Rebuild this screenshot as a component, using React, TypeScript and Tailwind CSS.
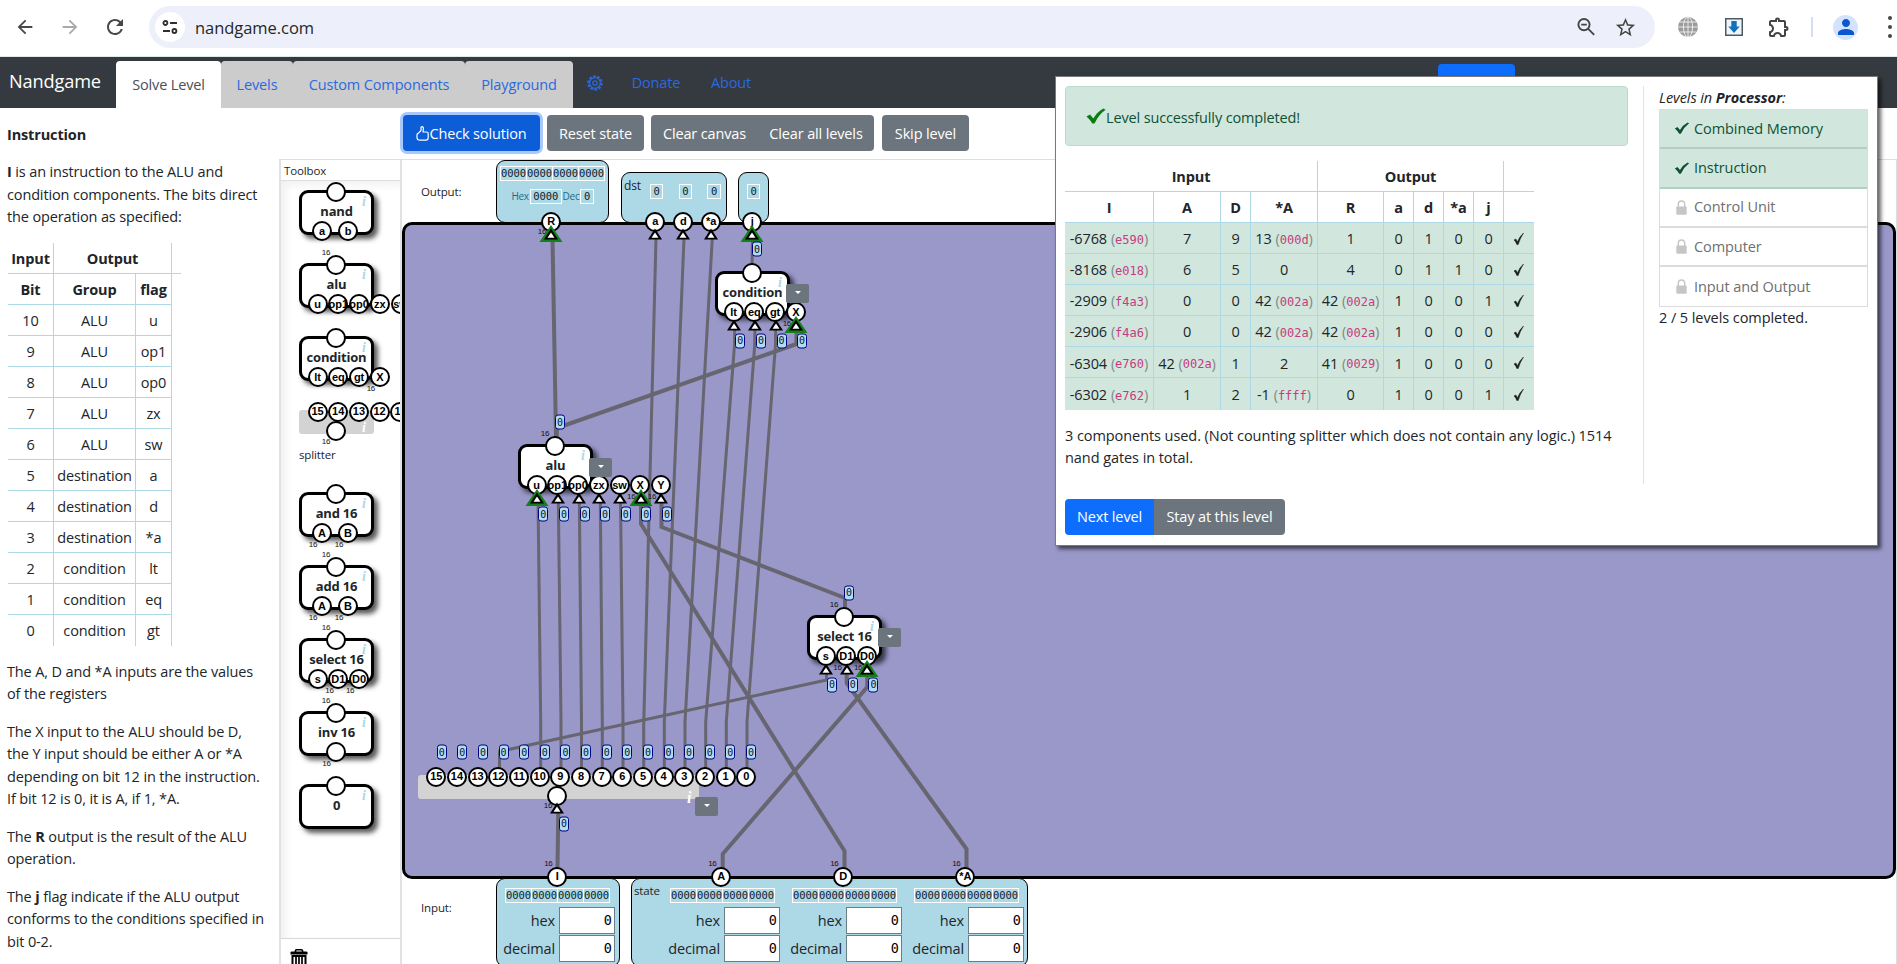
import React from "react";
import { MdArrowBack, MdArrowForward, MdRefresh, MdStarBorder, MdOutlineExtension, MdPerson } from "react-icons/md";

function BrowserBar() {
  return (
    <header className="flex h-[57px] shrink-0 items-center border-b border-[#dfeae3] bg-white pb-[2px]">
      <div className="flex w-[149px] items-center pl-[14px]">
        <MdArrowBack className="size-[22px] text-[#474747]" />
        <MdArrowForward className="ml-[23px] size-[22px] text-[#a9a9a9]" />
        <MdRefresh className="ml-[22px] size-[24px] text-[#474747]" />
      </div>
      <div className="flex h-[42px] w-[1506px] items-center rounded-full bg-[#edf0fa] pl-[6px] pr-[18px]">
        <span className="flex size-[30px] items-center justify-center rounded-full bg-white">
          <svg viewBox="0 0 16 16" className="size-[16px]" fill="none" stroke="#2f2f2f" strokeWidth="1.8">
            <circle cx="3.4" cy="4" r="2" />
            <path d="M8 4h7M1 12h7" />
            <circle cx="12.4" cy="12" r="2" />
          </svg>
        </span>
        <span className="ml-[10px] flex-1 pt-[2px] text-[16.5px] tracking-[-0.05px] text-[#262626]">nandgame.com</span>
        <svg viewBox="0 0 20 20" className="size-[20px]" fill="none" stroke="#454545" strokeWidth="1.9">
          <circle cx="8" cy="7.6" r="5.6" />
          <path d="M12.2 11.8l6 6M5.2 7.6h5.6" />
        </svg>
        <MdStarBorder className="ml-[18px] size-[23px] text-[#454545]" />
      </div>
      <svg viewBox="0 0 22 22" className="ml-[22px] size-[22px]">
        <circle cx="11" cy="11" r="10" fill="#9b9b9b" />
        <g fill="none" stroke="#f2f2f2" strokeWidth="0.9">
          <ellipse cx="11" cy="11" rx="4.6" ry="10" />
          <path d="M11 1v20M1 11h20M2.5 6h17M2.5 16h17" />
        </g>
      </svg>
      <svg viewBox="0 0 18 18" className="ml-[26px] size-[18px]">
        <rect x="0.75" y="0.75" width="16.5" height="16.5" fill="#eef6fb" stroke="#4c5a66" strokeWidth="1.5" />
        <path d="M6.3 3h5.4v5.6h3L9 15 3.300 8.600h3z" fill="#1173bd" />
      </svg>
      <MdOutlineExtension className="ml-[24px] size-[24px] text-[#454545]" />
      <span className="ml-[20px] h-[20px] w-[2px] bg-[#d5def3]" />
      <span className="ml-[20px] flex size-[25px] items-center justify-center rounded-full bg-[#d3e3fd]">
        <MdPerson className="size-[24px] text-[#0b57d0]" />
      </span>
      <span className="ml-[30px] flex flex-col gap-[5px]">
        <i className="size-[4px] rounded-full bg-[#454545]" />
        <i className="size-[4px] rounded-full bg-[#454545]" />
        <i className="size-[4px] rounded-full bg-[#454545]" />
      </span>
    </header>
  );
}

function NavBar() {
  return (
    <nav className="flex h-[51px] shrink-0 items-end bg-[#343a40] text-[#2b69e0]">
      <span className="flex h-full w-[116px] items-center pb-[1px] pl-[9px] text-[18.200px] tracking-[-0.150px] text-white">Nandgame</span>
      <span className="flex h-[47px] w-[105px] items-center justify-center rounded-t-[4px] bg-white text-[#495057]">Solve Level</span>
      <span className="flex h-[47px] w-[72px] items-center justify-center rounded-t-[4px] bg-[#ccc]">Levels</span>
      <span className="flex h-[47px] w-[172px] items-center justify-center rounded-t-[4px] bg-[#ccc]">Custom Components</span>
      <span className="flex h-[47px] w-[108px] items-center justify-center rounded-t-[4px] bg-[#ccc]">Playground</span>
      <span className="flex h-full w-[43px] items-center justify-center">
        <svg viewBox="0 0 16 16" className="size-[16px]" fill="none" stroke="#2b69e0">
          <circle cx="8" cy="8" r="6.700" strokeWidth="2" strokeDasharray="2.6 1.600" />
          <circle cx="8" cy="8" r="5.300" strokeWidth="1.2" />
          <circle cx="8" cy="8" r="2.200" strokeWidth="1.3" />
        </svg>
      </span>
      <span className="flex h-full w-[80px] items-center justify-center">Donate</span>
      <span className="flex h-full w-[70px] items-center justify-center">About</span>
      <span className="mb-[12px] ml-[672px] h-[32px] w-[77px] rounded-[4px] bg-[#0d6efd]" />
    </nav>
  );
}

const FLAGS = [
  ["10", "ALU", "u"], ["9", "ALU", "op1"], ["8", "ALU", "op0"], ["7", "ALU", "zx"], ["6", "ALU", "sw"],
  ["5", "destination", "a"], ["4", "destination", "d"], ["3", "destination", "*a"],
  ["2", "condition", "lt"], ["1", "condition", "eq"], ["0", "condition", "gt"],
];

function Instructions() {
  const cell = "flex items-center justify-center border-[#add8e6] pt-[2px]";
  return (
    <aside className="flex w-[279px] shrink-0 flex-col pl-[7px] pt-[16px] leading-[22.5px]">
      <h1 className="font-bold">Instruction</h1>
      <p className="mt-[14.500px]"><b>I</b> is an instruction to the ALU and<br />condition components. The bits direct<br />the operation as specified:</p>
      <div className="ml-px mt-[14.500px] flex w-[173px] flex-col">
        <div className="flex h-[31px] w-[173px] border-b border-[#add8e6] font-bold">
          <span className={cell + " w-[46px] border-r"}>Input</span>
          <span className={cell + " w-[118px] border-r"}>Output</span>
        </div>
        <div className="grid w-[164px] grid-cols-[46px_82px_36px]">
          {[["Bit", "Group", "flag"], ...FLAGS].map((r, i) => r.map((c, j) => (
            <span key={i + "-" + j} className={cell + " h-[31px] border-r " + (i < 11 ? "border-b " : "") + (i === 0 ? "font-bold" : "")}>{c}</span>
          )))}
        </div>
      </div>
      <p className="mt-[14.500px]">The A, D and *A inputs are the values<br />of the registers</p>
      <p className="mt-[15px]">The X input to the ALU should be D,<br />the Y input should be either A or *A<br />depending on bit 12 in the instruction.<br />If bit 12 is 0, it is A, if 1, *A.</p>
      <p className="mt-[15px]">The <b>R</b> output is the result of the ALU<br />operation.</p>
      <p className="mt-[15px]">The <b>j</b> flag indicate if the ALU output<br />conforms to the conditions specified in<br />bit 0-2.</p>
    </aside>
  );
}

function Actions() {
  const b = "flex h-[36px] items-center justify-center pt-[2px] text-white bg-[#6c757d]";
  return (
    <div className="flex h-[51px] shrink-0 items-start pl-[124px] pt-[7px]">
      <button className="flex h-[36px] w-[137px] items-center justify-center rounded-[4px] bg-[#0b5ed7] pt-[2px] text-white shadow-[0_0_0_3px_#a9c9fb]">
        <svg viewBox="0 0 13 15" className="mb-[2px] h-[15px] w-[13px]" fill="none" stroke="white" strokeWidth="1.2" strokeLinejoin="round">
          <path d="M1 9Q1 7.600 2.500 7.200L5 4.500V1.700Q5 0.700 6 0.700Q7.600 0.800 7.400 2.800L7 6H10.500Q12.200 6 12.200 7.500V11.500Q12.200 14.200 10 14.200H4Q1 14.200 1 11.500z" />
        </svg>
        Check solution
      </button>
      <button className={b + " ml-[7px] w-[97px] rounded-[4px]"}>Reset state</button>
      <div className="ml-[7px] flex">
        <button className={b + " w-[107px] rounded-l-[4px]"}>Clear canvas</button>
        <button className={b + " w-[116px] rounded-r-[4px]"}>Clear all levels</button>
      </div>
      <button className={b + " ml-[8px] w-[87px] rounded-[4px]"}>Skip level</button>
    </div>
  );
}

/* Circuit primitives */

function Pin({ x, y, label = "" }: { x: number; y: number; label?: string }) {
  return (
    <span className="absolute flex size-[20px] -translate-x-1/2 -translate-y-1/2 items-center justify-center rounded-full border-2 border-black bg-white font-['Liberation_Sans'] text-[11px] font-bold leading-none tracking-normal text-black" style={{ left: x, top: y }}>
      {label}
    </span>
  );
}

function Sixteen({ x, y }: { x: number; y: number }) {
  return <span className="absolute -translate-x-1/2 -translate-y-1/2 font-['Liberation_Sans'] text-[8px] leading-none tracking-[-0.3px] text-[#111]" style={{ left: x, top: y }}>16</span>;
}

function Value({ x, y }: { x: number; y: number }) {
  return (
    <span className="absolute flex h-[15px] w-[10px] -translate-x-1/2 -translate-y-1/2 items-center justify-center rounded-[3px] border border-[#00007c] bg-[#b0dcf6] font-['DejaVu_Sans_Mono'] text-[10px] leading-none tracking-normal text-[#112]" style={{ left: x, top: y }}>0</span>
  );
}

function Arrow({ x, y, active = false }: { x: number; y: number; active?: boolean }) {
  return (
    <svg viewBox="0 0 24 18" className="absolute h-[18px] w-[24px] -translate-x-1/2" style={{ left: x, top: y }}>
      {active && <path d="M12 0L23.500 17H0.500z" fill="#14801c" />}
      <path d="M12 3.500L19 14.500H5z" fill="#000" />
      <path d="M12 7.500L15.500 12.700H8.500z" fill="#fff" />
    </svg>
  );
}

function MenuButton({ x, y }: { x: number; y: number }) {
  return (
    <span className="absolute flex h-[19px] w-[23px] items-center justify-center rounded-[2px] bg-[#6c757d]" style={{ left: x, top: y }}>
      <svg viewBox="0 0 6 3" className="mb-[2px] h-[3px] w-[6px]"><path d="M0 0h6L3 3z" fill="#fff" /></svg>
    </span>
  );
}

type GateProps = { title: string; pins: string[]; wide?: number[]; out16?: boolean; hasOut?: boolean };

function pinOffset(i: number, n: number) {
  if (n === 1) return 36.500;
  return n === 2 ? 23 + 26 * i : 18.700 + 20.700 * i;
}

function Gate({ title, pins, wide = [], out16 = false, hasOut = true }: GateProps) {
  return (
    <div className="relative h-[45px] w-[75px] shrink-0 rounded-[9px] border-[3px] border-black bg-white shadow-[4px_4px_5px_rgba(0,0,0,0.65)]">
      <div className="pt-[9px] text-center text-[13px] font-bold leading-[19px] tracking-[-0.2px]">{title}</div>
      <span className="absolute left-[60px] top-[1px] font-['Liberation_Serif'] text-[14px] font-bold italic leading-[16px] text-[#add8e6]">i</span>
      <div className="absolute -left-[3px] -top-[3px]">
        {out16 && <Sixteen x={27} y={-10.500} />}
        {hasOut && <Pin x={36.500} y={2} />}
        {pins.map((p, i) => (
          <React.Fragment key={i}>
            <Pin x={pinOffset(i, pins.length)} y={pins.length === 1 ? 40.500 : 41.300} label={p} />
            {wide.includes(i) && <Sixteen x={pinOffset(i, pins.length) - 9} y={52.500} />}
          </React.Fragment>
        ))}
      </div>
    </div>
  );
}

const ALU_PINS = ["u", "op1", "op0", "zx", "sw", "X", "Y"];

function Toolbox() {
  return (
    <section className="flex w-[123px] shrink-0 flex-col overflow-hidden border-x-2 border-[#e2e2e4]">
      <h2 className="h-[21px] border-b border-[#dedede] pl-[3px] text-[11.500px] leading-[22px]">Toolbox</h2>
      <div className="flex h-[758px] flex-col items-start gap-[28px] pl-[18px] pt-[9px] shadow-[inset_5px_4px_8px_rgba(0,0,0,0.06)]">
        <Gate title="nand" pins={["a", "b"]} />
        <Gate title="alu" pins={ALU_PINS} out16 />
        <Gate title="condition" pins={["lt", "eq", "gt", "X"]} wide={[3]} />
        <div className="flex flex-col pt-[1px]">
          <div className="relative h-[24px] w-[75px] rounded-[3px] bg-[#d3d3d3]">
            {["15", "14", "13", "12", "11"].map((p, i) => <Pin key={p} x={18.500 + 20.700 * i} y={1.500} label={p} />)}
            <Pin x={36.500} y={21} />
            <Sixteen x={27} y={31.500} />
            <span className="absolute left-[63px] top-[10px] font-['Liberation_Serif'] text-[14px] font-bold italic leading-[16px] text-white">i</span>
          </div>
          <span className="mt-[11px] h-[19px] text-[11.500px] leading-[19px]">splitter</span>
        </div>
        <Gate title="and 16" pins={["A", "B"]} wide={[0, 1]} />
        <Gate title="add 16" pins={["A", "B"]} wide={[0, 1]} out16 />
        <Gate title="select 16" pins={["s", "D1", "D0"]} wide={[1, 2]} out16 />
        <Gate title="inv 16" pins={[""]} wide={[0]} out16 />
        <Gate title="0" pins={[]} />
      </div>
      <div className="flex h-[26px] shrink-0 items-start border-t border-[#d8d8d8] pl-[8px] pt-[10px]">
        <svg viewBox="0 0 20 22" className="h-[22px] w-[20px]">
          <path d="M6.500 3V1.500Q6.500 0.800 7.500 0.800H12.500Q13.500 0.800 13.500 1.500V3" fill="none" stroke="#000" strokeWidth="1.600" />
          <path d="M1.500 3.600Q1.500 2.600 3 2.600H17Q18.500 2.600 18.500 3.600V5.500H1.500z" fill="#000" />
          <path d="M3.500 7V20.500H16.500V7z" fill="none" stroke="#000" strokeWidth="2" />
          <path d="M7 7V20M10 7V20M13 7V20" stroke="#000" strokeWidth="1.700" />
        </svg>
      </div>
    </section>
  );
}

function Bits() {
  return (
    <div className="flex h-[15px] w-[105px] border border-white font-['DejaVu_Sans_Mono'] text-[10.500px] leading-[13px] tracking-[-0.1px] text-[#10202a]">
      {[0, 1, 2, 3].map((i) => (
        <span key={i} className={"flex flex-1 justify-center " + (i < 3 ? "border-r border-white" : "")}>0000</span>
      ))}
    </div>
  );
}

function BoxedValue({ children }: { children: string }) {
  return <span className="flex h-[15px] items-center border border-white px-[2.500px] font-['DejaVu_Sans_Mono'] text-[10.500px] leading-none tracking-[-0.1px] text-[#10202a]">{children}</span>;
}

function OutputStrip() {
  const panel = "rounded-[9px] border border-black bg-[#add8e6]";
  return (
    <div className="flex h-[64px] items-end">
      <span className="mb-[23px] w-[94px] pl-[19px] text-[11.500px]">Output:</span>
      <div className={panel + " flex h-[63px] w-[113px] flex-col items-center pt-[5px]"}>
        <Bits />
        <div className="mt-[8px] flex items-center gap-[1px] text-[10px] tracking-[-0.3px] text-[#1d6c8c]">Hex<BoxedValue>0000</BoxedValue>Dec<BoxedValue>0</BoxedValue></div>
      </div>
      <div className={panel + " ml-[12px] flex h-[51px] w-[106px] pl-[2px]"}>
        <span className="w-[26px] pt-[4px] text-[12px]">dst</span>
        <div className="flex gap-[15.500px] pt-[11px]"><BoxedValue>0</BoxedValue><BoxedValue>0</BoxedValue><BoxedValue>0</BoxedValue></div>
      </div>
      <div className={panel + " ml-[11px] flex h-[51px] w-[31px] items-start justify-center pt-[11px]"}><BoxedValue>0</BoxedValue></div>
    </div>
  );
}

function Register() {
  const box = "h-[27px] w-[56px] border border-[#6b7d86] bg-white pr-[2px] text-right font-['DejaVu_Sans_Mono'] text-[13.500px] leading-[25px] tracking-normal text-black";
  return (
    <div className="flex w-[112px] flex-col items-end pt-[9px]">
      <div className="mr-[5px]"><Bits /></div>
      <div className="mt-[4px] flex items-center gap-[4px]">hex<span className={box}>0</span></div>
      <div className="mt-[1px] flex items-center gap-[4px]">decimal<span className={box}>0</span></div>
    </div>
  );
}

function InputStrip() {
  const panel = "flex h-[89px] shrink-0 rounded-[9px] border border-black bg-[#add8e6]";
  return (
    <div className="flex h-[86px] shrink-0 items-start text-[#212529]">
      <span className="w-[94px] pl-[19px] pt-[21px] text-[11.500px]">Input:</span>
      <div className={panel + " w-[124px] pl-[6px]"}><Register /></div>
      <div className={panel + " ml-[11px] w-[397px] pl-[2px]"}>
        <span className="w-[34px] pt-[3px] text-[11.500px]">state</span>
        <Register />
        <span className="w-[10px]" />
        <Register />
        <span className="w-[10px]" />
        <Register />
      </div>
    </div>
  );
}

const THIN = [
  "656,238 643.7,725 643.7,768", "684,238 664.3,722 664.3,768", "712.3,238 685,722 685,768",
  "734.700,325 734.500,345 705.700,722 705.700,768", "755,325 754.700,345 726.300,722 726.300,768", "775.700,325 775.500,345 747,722 747,768",
  "538,498 540.700,722 540.700,768", "558.300,498 561,722 561,768", "579.300,498 581.500,722 581.500,768",
  "600.300,498 602.300,722 602.300,768", "620.500,498 623,722 623,768",
  "826.500,670 826.500,680 499.500,751.500 499.500,768", "752.500,240 752,265",
];
const THICK = [
  "552.500,238 556,437", "796.500,328 796.500,344 557,428 556.500,440", "641,498 641,524 844.500,851 844.500,868",
  "661.500,500 661.500,527 845,598 845,610", "846.700,670 846.700,683 966.500,849 966.500,868",
  "867.300,672 867.300,687 722.700,854 722.700,868", "558.300,810 557.500,868",
];

function Placed({ x, y, children }: { x: number; y: number; children: React.ReactNode }) {
  return <div className="absolute" style={{ left: x, top: y }}>{children}</div>;
}

/* Circuit diagram, drawn on page coordinates over the board */
function Diagram() {
  const outs: [number, string, boolean][] = [[551.300, "R", true], [655.300, "a", false], [683.300, "d", false], [711.300, "*a", false], [752.300, "j", true]];
  const ins: [number, string][] = [[557.300, "I"], [721.300, "A"], [843.300, "D"], [965.300, "*A"]];
  return (
    <div className="absolute left-0 top-0 h-[964px] w-[1050px]">
      <svg viewBox="0 0 1050 964" className="absolute left-0 top-0 h-[964px] w-[1050px]" fill="none" stroke="#67656f">
        {THIN.map((p) => <polyline key={p} points={p} strokeWidth="3" />)}
        {THICK.map((p) => <polyline key={p} points={p} strokeWidth="4" />)}
      </svg>
      <Sixteen x={542} y={232} />
      {outs.map(([x, l]) => <Pin key={l} x={x} y={221.500} label={l} />)}
      {outs.map(([x, l, g]) => <Arrow key={l} x={x} y={225} active={g} />)}
      <Value x={757} y={249} />

      <Placed x={715} y={271}><Gate title="condition" pins={["lt", "eq", "gt", "X"]} wide={[3]} /></Placed>
      {[0, 1, 2, 3].map((i) => <Arrow key={i} x={734.300 + 20.600 * i} y={316} active={i === 3} />)}
      {[0, 1, 2, 3].map((i) => <Value key={i} x={740.300 + 20.600 * i} y={340.500} />)}
      <MenuButton x={786} y={284} />

      <Placed x={518} y={444}><Gate title="alu" pins={ALU_PINS} wide={[5, 6]} out16 /></Placed>
      {ALU_PINS.map((p, i) => <Arrow key={p} x={537.300 + 20.650 * i} y={489} active={p === "u" || p === "X"} />)}
      {ALU_PINS.map((p, i) => <Value key={p} x={543.300 + 20.600 * i} y={514} />)}
      <Value x={560} y={422} />
      <MenuButton x={589} y={458} />

      <Placed x={807} y={615}><Gate title="select 16" pins={["s", "D1", "D0"]} wide={[1, 2]} out16 /></Placed>
      {[0, 1, 2].map((i) => <Arrow key={i} x={826.300 + 20.500 * i} y={660} active={i === 2} />)}
      {[0, 1, 2].map((i) => <Value key={i} x={832 + 20.700 * i} y={684.500} />)}
      <Value x={849} y={592.500} />
      <MenuButton x={878} y={628} />

      <div className="absolute left-[418px] top-[775px] h-[24px] w-[281px] rounded-[3px] bg-[#d3d3d3]" />
      <span className="absolute left-[687px] top-[790px] font-['Liberation_Serif'] text-[16px] font-bold italic leading-[16px] text-white">i</span>
      {Array.from({ length: 16 }, (_, i) => <Pin key={i} x={436.300 + 20.670 * i} y={776.500} label={String(15 - i)} />)}
      {Array.from({ length: 16 }, (_, i) => <Value key={i} x={441.700 + 20.620 * i} y={752} />)}
      <Pin x={557.300} y={795.500} />
      <Arrow x={557.300} y={799} />
      <Sixteen x={548} y={806} />
      <Value x={564} y={823.500} />
      <MenuButton x={695} y={797} />

      {ins.map(([x, l]) => (
        <React.Fragment key={l}>
          <Pin x={x} y={876.500} label={l} />
          <Sixteen x={x - 9} y={864} />
        </React.Fragment>
      ))}
      <div className="absolute left-[1546px] top-[879px] h-[2px] w-[297px] bg-white" />
    </div>
  );
}

const TESTS = [
  ["-6768 (e590)", "7", "9", "13 (000d)", "1", "0", "1", "0", "0", "✓"],
  ["-8168 (e018)", "6", "5", "0", "4", "0", "1", "1", "0", "✓"],
  ["-2909 (f4a3)", "0", "0", "42 (002a)", "42 (002a)", "1", "0", "0", "1", "✓"],
  ["-2906 (f4a6)", "0", "0", "42 (002a)", "42 (002a)", "1", "0", "0", "0", "✓"],
  ["-6304 (e760)", "42 (002a)", "1", "2", "41 (0029)", "1", "0", "0", "0", "✓"],
  ["-6302 (e762)", "1", "2", "-1 (ffff)", "0", "1", "0", "0", "1", "✓"],
];

function TestCell({ text }: { text: string }) {
  if (text === "✓") {
    return <svg viewBox="0 0 10 12" className="h-[12px] w-[10px]"><path d="M0 7L1.800 6Q3 7.500 3.300 9Q5.500 3.500 9.500 0Q6 5.500 4.200 11.500H2.800Q2 8.500 0 7z" fill="#1a1e21" stroke="#1a1e21" strokeWidth="0.5" /></svg>;
  }
  const m = text.match(/^(\S+) \((\w+)\)$/);
  if (!m) return <>{text}</>;
  return (
    <>
      {m[1]}
      <span className="ml-[4px] text-[#7d8b86]">(</span>
      <code className="pt-[2px] font-['DejaVu_Sans_Mono'] text-[12px] tracking-normal text-[#c73b80]">{m[2]}</code>
      <span className="text-[#7d8b86]">)</span>
    </>
  );
}

function Check({ className }: { className: string }) {
  return (
    <svg viewBox="0 0 20 16" className={className} fill="currentColor">
      <path d="M0.500 8.500L4 6.500L7.300 10.500Q11.500 3.500 17.500 0.500L19.500 1.800Q12.500 7 8.500 15.500H6.300Q4 11.500 0.500 8.500z" />
    </svg>
  );
}

function LockIcon() {
  return (
    <svg viewBox="0 0 11 15" className="h-[15px] w-[11px]">
      <path d="M2.300 7V4.300Q2.300 1 5.500 1T8.700 4.300V7" fill="none" stroke="#c6c6c6" strokeWidth="1.400" />
      <rect x="0.300" y="6.500" width="10.400" height="8.300" rx="1" fill="#c6c6c6" />
    </svg>
  );
}

function Dialog() {
  const heads = ["I", "A", "D", "*A", "R", "a", "d", "*a", "j", ""];
  return (
    <div className="absolute left-[1055px] top-[76px] flex h-[470px] w-[823px] border border-[#7a7a7a] bg-white shadow-[3px_3px_4px_rgba(0,0,0,0.6)]">
      <div className="flex w-[587px] flex-col pl-[9px] pt-[9px]">
        <div className="flex h-[60px] w-[563px] items-center rounded-[4px] border border-[#badbcc] bg-[#d1e7dd] pl-[20px] pt-[4px] text-[#0f5132]">
          <Check className="mb-[4px] h-[16px] w-[20px] text-[#0a7d12]" />
          Level successfully completed!
        </div>
        <div className="mt-[15px] flex h-[31px] w-[469px] border-b border-[#add8e6] font-bold">
          <span className="flex w-[253px] items-center justify-center border-r border-[#add8e6] pt-[2px]">Input</span>
          <span className="flex w-[186px] items-center justify-center border-r border-[#add8e6] pt-[2px]">Output</span>
        </div>
        <div className="grid w-[469px] grid-cols-[89px_67px_30px_67px_66px_30px_30px_30px_30px_30px]">
          {heads.map((h, j) => (
            <span key={j} className={"flex h-[31px] items-center justify-center border-b border-[#add8e6] pt-[2px] font-bold " + (j < 9 ? "border-r" : "")}>{h}</span>
          ))}
          {TESTS.map((r, i) => r.map((c, j) => (
            <span key={i + "-" + j} className={"flex h-[31.100px] items-center justify-center border-[#add8e6] bg-[#d1e7dd] pt-[2px] " + (j < 9 ? "border-r " : "") + (i < 5 ? "border-b" : "")}>
              <TestCell text={c} />
            </span>
          )))}
        </div>
        <p className="mt-[15px] leading-[22.500px] tracking-[-0.070px]">3 components used. (Not counting splitter which does not contain any logic.) 1514<br />nand gates in total.</p>
        <div className="mt-[29px] flex text-white">
          <button className="h-[36px] w-[89px] rounded-l-[4px] bg-[#0d6efd] pt-[1px]">Next level</button>
          <button className="h-[36px] w-[131px] rounded-r-[4px] bg-[#6c757d] pt-[1px]">Stay at this level</button>
        </div>
      </div>
      <div className="mt-[9px] flex h-[398px] w-[225px] flex-col border-l border-[#e3e3e3] pl-[15px] leading-[22.500px] tracking-[-0.070px]">
        <div className="pt-[1px] italic">Levels in <b>Processor</b>:</div>
        <ul className="-mt-[1px] flex flex-col border border-[#dcdcdc]">
          {["Combined Memory", "Instruction"].map((t) => (
            <li key={t} className="flex h-[39.500px] items-center border-b-2 border-[#b4cfc2] bg-[#d1e7dd] pl-[14px] text-[#0f5132]"><Check className="h-[12px] w-[16px]" /><span className="ml-[4px] pt-[1px]">{t}</span></li>
          ))}
          {["Control Unit", "Computer", "Input and Output"].map((t, i) => (
            <li key={t} className={"flex h-[39.300px] items-center border-[#dcdcdc] pl-[16px] text-[#6c6f73] " + (i < 2 ? "border-b-2" : "")}><LockIcon /><span className="ml-[7px] pt-[1px]">{t}</span></li>
          ))}
        </ul>
        <div>2 / 5 levels completed.</div>
      </div>
    </div>
  );
}

export default function App() {
  return (
    <div className="relative flex h-[964px] w-[1897px] flex-col overflow-hidden whitespace-nowrap bg-white font-['Open_Sans',sans-serif] text-[14.500px] tracking-[-0.140px] text-[#212529]">
      <BrowserBar />
      <NavBar />
      <main className="flex h-[856px]">
        <Instructions />
        <div className="flex flex-1 flex-col">
          <Actions />
          <div className="flex h-[805px] border-t border-[#dedede]">
            <Toolbox />
            <div className="flex flex-1 flex-col border-r border-[#dedede]">
              <OutputStrip />
              <div className="-mt-[1px] h-[657px] w-[1494px] shrink-0 rounded-[10px] border-[3px] border-black bg-[#9998c9]" />
              <div className="-mt-[1px]"><InputStrip /></div>
            </div>
          </div>
        </div>
      </main>
      <Diagram />
      <Dialog />
    </div>
  );
}
